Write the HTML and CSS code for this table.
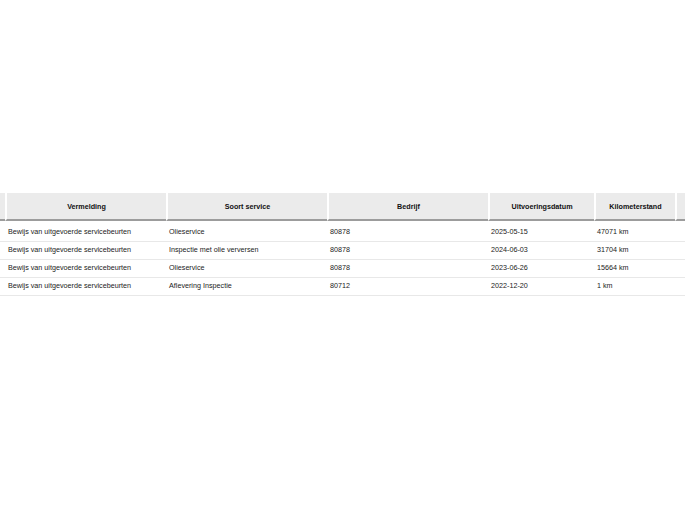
FILE: index.html
```html
<!DOCTYPE html>
<html lang="nl">
<head>
<meta charset="utf-8">
<title>Servicehistorie</title>
<link rel="stylesheet" href="styles.css">
</head>
<body>
<div class="page">
  <div class="table-wrap">
    <table class="service-table">
      <colgroup>
        <col class="c-pre">
        <col class="c-wide">
        <col class="c-wide">
        <col class="c-wide">
        <col class="c-date">
        <col class="c-km">
        <col class="c-post">
      </colgroup>
      <thead>
        <tr>
          <th class="first"></th>
          <th>Vermelding</th>
          <th>Soort service</th>
          <th>Bedrijf</th>
          <th>Uitvoeringsdatum</th>
          <th>Kilometerstand</th>
          <th></th>
        </tr>
      </thead>
      <tbody>
        <tr class="row-first">
          <td></td>
          <td>Bewijs van uitgevoerde servicebeurten</td>
          <td>Olieservice</td>
          <td>80878</td>
          <td>2025-05-15</td>
          <td>47071 km</td>
          <td></td>
        </tr>
        <tr>
          <td></td>
          <td>Bewijs van uitgevoerde servicebeurten</td>
          <td>Inspectie met olie verversen</td>
          <td>80878</td>
          <td>2024-06-03</td>
          <td>31704 km</td>
          <td></td>
        </tr>
        <tr>
          <td></td>
          <td>Bewijs van uitgevoerde servicebeurten</td>
          <td>Olieservice</td>
          <td>80878</td>
          <td>2023-06-26</td>
          <td>15664 km</td>
          <td></td>
        </tr>
        <tr>
          <td></td>
          <td>Bewijs van uitgevoerde servicebeurten</td>
          <td>Aflevering Inspectie</td>
          <td>80712</td>
          <td>2022-12-20</td>
          <td>1 km</td>
          <td></td>
        </tr>
      </tbody>
    </table>
  </div>
</div>
</body>
</html>
```

FILE: styles.css
```css
html, body {
  margin: 0;
  padding: 0;
  background: #ffffff;
  overflow: hidden;
}

.page {
  width: 685px;
  height: 514px;
  padding-top: 193px;
  box-sizing: border-box;
  font-family: "Liberation Sans", Arial, sans-serif;
  font-size: 7.2px;
  color: #222222;
}

.table-wrap {
  width: 685px;
  overflow: hidden;
}

.service-table {
  table-layout: fixed;
  border-collapse: separate;
  border-spacing: 0;
  width: 775px;
}

.c-pre { width: 5px; }
.c-wide { width: 161px; }
.c-date { width: 106px; }
.c-km { width: 81px; }
.c-post { width: 100px; }

.service-table th {
  height: 26px;
  padding: 0;
  background: #ebebeb;
  border-left: 2px solid #ffffff;
  border-bottom: 2px solid #9c9c9c;
  font-weight: bold;
  color: #111111;
  text-align: center;
  vertical-align: middle;
  line-height: 9px;
  white-space: nowrap;
}

.service-table th.first {
  border-left: 0;
}

.service-table td {
  padding: 3px 2px 5px 3px;
  line-height: 9px;
  border-bottom: 1px solid #e8e8e8;
  text-align: left;
  vertical-align: top;
  white-space: nowrap;
  overflow: hidden;
}

.service-table tr.row-first td {
  padding-top: 6px;
}
```
